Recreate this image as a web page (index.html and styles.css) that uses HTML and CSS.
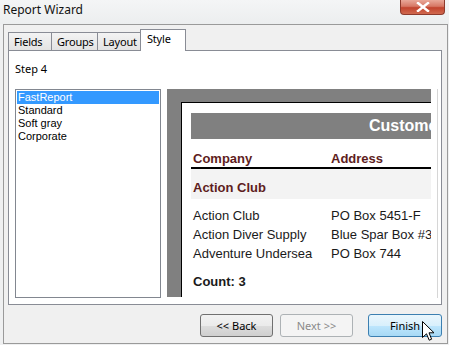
FILE: index.html
```html
<!DOCTYPE html>
<html>
<head>
<meta charset="utf-8">
<link rel="stylesheet" href="styles.css">
</head>
<body>
<div class="titlebar">
  <div class="title">Report Wizard</div>
  <div class="close"><svg width="14" height="10" viewBox="0 0 14 10"><path d="M2 1 L12 9 M12 1 L2 9" stroke="#fff" stroke-width="2.4" stroke-linecap="square"/></svg></div>
</div>
<div class="window">
  <div class="tabs">
    <div class="tab t-fields">Fields</div>
    <div class="tab t-groups">Groups</div>
    <div class="tab t-layout">Layout</div>
    <div class="tab t-style active">Style</div>
  </div>
  <div class="panel">
    <div class="step">Step 4</div>
    <div class="content">
      <div class="listbox">
        <div class="item selected">FastReport</div>
        <div class="item">Standard</div>
        <div class="item">Soft gray</div>
        <div class="item">Corporate</div>
      </div>
      <div class="preview">
        <div class="page">
          <div class="bar">Customers</div>
          <div class="row head"><span class="c1">Company</span><span class="c2">Address</span></div>
          <div class="group">Action Club</div>
          <div class="rows">
            <div class="row data"><span class="c1">Action Club</span><span class="c2">PO Box 5451-F</span></div>
            <div class="row data"><span class="c1">Action Diver Supply</span><span class="c2">Blue Spar Box #3</span></div>
            <div class="row data"><span class="c1">Adventure Undersea</span><span class="c2">PO Box 744</span></div>
          </div>
          <div class="count">Count: 3</div>
        </div>
      </div>
      <div class="edge"></div>
    </div>
  </div>
  <div class="buttons">
    <div class="btn back">&lt;&lt; Back</div>
    <div class="btn next disabled">Next &gt;&gt;</div>
    <div class="btn finish hover">Finish</div>
  </div>
</div>
<svg class="cursor" width="13" height="21" viewBox="0 0 13 21"><path d="M0.5 0.5 L0.5 16.5 L4.5 12.8 L7.2 19.2 L9.6 18.2 L7 11.8 L12 11.8 Z" fill="#fff" stroke="#000" stroke-width="1"/></svg>
</body>
</html>
```
FILE: styles.css
```css
html, body {
  margin: 0;
  padding: 0;
}
body {
  width: 449px;
  height: 345px;
  overflow: hidden;
  position: relative;
  background: #eff0f1;
  font-family: "Noto Sans", "Open Sans", sans-serif;
  font-size: 11px;
  color: #000;
}
.titlebar {
  height: 24px;
  display: flex;
  justify-content: space-between;
  align-items: flex-start;
  background: linear-gradient(#f4f5f6, #eceeef);
}
.title {
  padding: 2px 0 0 3px;
  font-size: 12px;
  line-height: 16px;
  color: #111;
}
.close {
  width: 43px;
  height: 14px;
  margin-right: 4px;
  border: 1px solid #8d3a2c;
  border-top: none;
  border-radius: 0 0 4px 4px;
  background: linear-gradient(#e9a899 0%, #d77865 45%, #c2442e 55%, #d0694f 100%);
  display: flex;
  align-items: center;
  justify-content: center;
}
.close svg { display: block; }
.window {
  margin: 0 1px 0 3px;
  height: 320px;
  box-sizing: border-box;
  border: 1px solid #9a9a9a;
  background: #f0f0f0;
  padding: 4px 5px 0 4px;
}
.tabs {
  display: flex;
  align-items: flex-end;
  height: 21px;
  position: relative;
  z-index: 2;
}
.tab {
  box-sizing: border-box;
  height: 18px;
  border: 1px solid #898c95;
  border-bottom: none;
  background: linear-gradient(#f3f3f3, #e3e3e3);
  padding: 0 0 0 5px;
  line-height: 17px;
  margin-right: -1px;
  letter-spacing: -0.2px;
  color: #000;
  white-space: nowrap;
}
.t-fields { width: 44px; }
.t-groups { width: 47px; }
.t-layout { width: 44px; }
.t-style { width: 46px; }
.tab.active {
  height: 22px;
  margin-bottom: -1px;
  background: #fff;
  line-height: 18px;
  padding-left: 6px;
}
.panel {
  box-sizing: border-box;
  height: 255px;
  border: 1px solid #898c95;
  background: #fff;
  position: relative;
  z-index: 1;
  padding: 10px 0 0 6px;
}
.step {
  line-height: 15px;
  height: 15px;
  margin-bottom: 13px;
}
.content {
  display: flex;
  height: 209px;
}
.listbox {
  box-sizing: border-box;
  width: 146px;
  height: 209px;
  border: 1px solid #828790;
  padding: 1px;
  background: #fff;
  flex: none;
  margin-right: 6px;
}
.item {
  font-family: "Liberation Sans", Arial, sans-serif;
  font-size: 11px;
  line-height: 13px;
  height: 13px;
  padding-left: 1px;
  white-space: nowrap;
}
.item.selected {
  background: #3399ff;
  color: #fff;
}
.preview {
  width: 264px;
  height: 208px;
  background: #808080;
  overflow: hidden;
  flex: none;
  padding: 13px 0 0 14px;
  box-sizing: border-box;
}
.edge {
  width: 1px;
  height: 209px;
  margin-left: 6px;
  background: #d6d6d6;
  flex: none;
}
.page {
  width: 400px;
  height: 260px;
  background: #fff;
  border-left: 1px solid #000;
  border-top: 1px solid #000;
  padding: 10px 0 0 9px;
  box-sizing: border-box;
  font-family: "Liberation Sans", Arial, sans-serif;
  font-size: 13px;
  color: #1a1a1a;
}
.bar {
  height: 26px;
  background: #808080;
  color: #fff;
  font-weight: bold;
  font-size: 16px;
  line-height: 26px;
  padding-left: 178px;
  white-space: nowrap;
}
.row {
  display: flex;
  white-space: nowrap;
}
.c1 {
  width: 138px;
  padding-left: 2px;
  flex: none;
}
.row.head {
  padding-top: 12px;
  line-height: 16px;
  height: 16px;
  border-bottom: 2px solid #000;
  color: #5e1d1d;
  font-weight: bold;
}
.group {
  background: #f3f3f3;
  color: #5e1d1d;
  font-weight: bold;
  padding: 11px 0 3px 2px;
  line-height: 16px;
}
.rows {
  padding-top: 7px;
}
.row.data {
  line-height: 19px;
  height: 19px;
}
.count {
  margin-top: 9px;
  line-height: 19px;
  padding-left: 2px;
  font-weight: bold;
  color: #1a1a1a;
}
.buttons {
  display: flex;
  justify-content: flex-end;
  padding-top: 9px;
}
.btn {
  box-sizing: border-box;
  width: 73px;
  height: 23px;
  border: 1px solid #707070;
  border-radius: 3px;
  background: linear-gradient(#f2f2f2 0%, #ebebeb 50%, #dddddd 51%, #cfcfcf 100%);
  text-align: center;
  line-height: 21px;
  color: #000;
}
.btn.back { margin-right: 7px; }
.btn.next { margin-right: 15px; }
.btn.disabled {
  border-color: #adb2b5;
  background: #f4f4f4;
  color: #8a8a8a;
}
.btn.hover {
  width: 74px;
  border-color: #3c7fb1;
  background: linear-gradient(#eaf6fd 0%, #d9f0fc 50%, #bee6fd 51%, #a7d9f5 100%);
}
.cursor {
  position: absolute;
  left: 422px;
  top: 321px;
}
```
